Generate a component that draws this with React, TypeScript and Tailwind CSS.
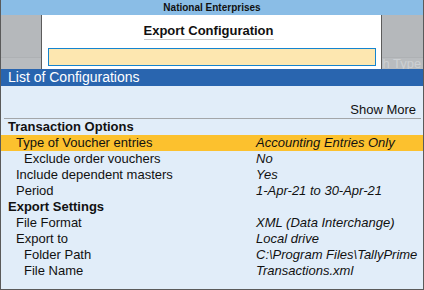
import React from 'react';

type Row = { label: string; value?: string; level: 0 | 1 | 2; active?: boolean };

const rows: Row[] = [
  { label: 'Transaction Options', level: 0 },
  { label: 'Type of Voucher entries', value: 'Accounting Entries Only', level: 1, active: true },
  { label: 'Exclude order vouchers', value: 'No', level: 2 },
  { label: 'Include dependent masters', value: 'Yes', level: 1 },
  { label: 'Period', value: '1-Apr-21 to 30-Apr-21', level: 1 },
  { label: 'Export Settings', level: 0 },
  { label: 'File Format', value: 'XML (Data Interchange)', level: 1 },
  { label: 'Export to', value: 'Local drive', level: 1 },
  { label: 'Folder Path', value: 'C:\\Program Files\\TallyPrime', level: 2 },
  { label: 'File Name', value: 'Transactions.xml', level: 2 },
];

const indent = ['pl-[7px] font-bold', 'pl-[15px]', 'pl-[23px]'];

const App: React.FC = () => {
  return (
    <div className="w-[424px] h-[290px] flex flex-col overflow-hidden border-x border-b border-[#5a5a5a] font-['Liberation_Sans',Arial,sans-serif] text-[#111]">
      {/* company title bar */}
      <div className="h-[15px] shrink-0 bg-[#8abde6] text-center text-[10px] font-bold leading-[15px]">
        National Enterprises
      </div>

      {/* dialog over greyed screen */}
      <div className="h-[54px] shrink-0 flex bg-[#b5b8bb]">
        <div className="w-[40px] flex flex-col justify-end">
          <div className="h-[12px] bg-[#b9bcbf] border-t border-[#aeb1b4]" />
        </div>
        <div className="w-[341px] flex flex-col bg-white border-x border-[#5c5c5c]">
          <div className="flex justify-center pt-[8px] pr-[6px]">
            <span className="text-[13px] font-bold leading-[16px] border-b border-[#c8c8c8]">Export Configuration</span>
          </div>
          <div className="mt-[8px] ml-[6px] mr-[5px] h-[18px] bg-[#fde7b0] border border-[#1584cf]" />
        </div>
        <div className="flex-1 flex flex-col justify-end overflow-hidden">
          <div className="h-[12px] bg-[#b9bcbf] border-t border-[#aeb1b4] text-[13px] leading-[11px] text-[#cdd0d3] whitespace-nowrap -ml-[6px]">
            ch Type
          </div>
        </div>
      </div>

      {/* list header */}
      <div className="h-[17px] shrink-0 bg-[#2965af] text-white text-[14px] leading-[17px] pl-[7px]">
        List of Configurations
      </div>

      {/* body */}
      <div className="flex-1 bg-[#e1edf9] pt-[16px] text-[13px] leading-[16px]">
        <div className="text-right pr-[7px]">Show More</div>
        <div className="h-px ml-[3px] mr-[2px] bg-[#a3a6a9]" />
        {rows.map((r) => (
          <div
            key={r.label}
            className={`grid grid-cols-[255px_1fr] h-[16px] whitespace-nowrap ${r.active ? 'bg-[#fcc12e]' : ''}`}
          >
            <span className={indent[r.level]}>{r.label}</span>
            {r.value && <span className="italic">{r.value}</span>}
          </div>
        ))}
      </div>
    </div>
  );
};

export default App;
